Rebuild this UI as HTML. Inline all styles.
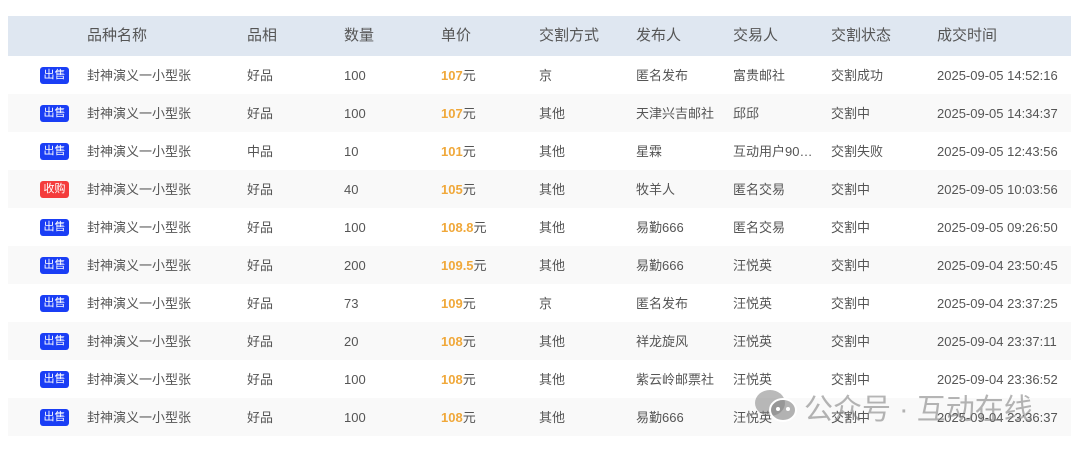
<!DOCTYPE html>
<html><head><meta charset="utf-8"><style>
body{margin:0;width:1080px;height:449px;background:#fff;font-family:"Liberation Sans","Noto Sans CJK SC",sans-serif;color:#555;position:relative;overflow:hidden}
.hd{position:absolute;left:8px;top:16px;width:1063px;height:40px;background:#dfe7f1}
.r{position:absolute;left:8px;width:1063px;height:38px}
.r.a{background:#f9f9f9}
.c{position:absolute;white-space:nowrap;font-size:13px;line-height:38px;top:1px}
.h{font-size:15px;line-height:40px;color:#555;top:0}
.b{position:absolute;left:32px;top:11px;width:29px;height:17px;border-radius:3px;background:#1a3ef5;color:#fff;font-size:11px;line-height:17px;text-align:center}
.b.red{background:#f43c3c}
.p{color:#f0a83a;font-weight:bold}
.wm{position:absolute;top:386px;font-size:29px;color:rgba(120,120,120,0.55);white-space:nowrap}
</style></head><body>
<div class="hd">
<span class="c h" style="left:79px">品种名称</span><span class="c h" style="left:239px">品相</span><span class="c h" style="left:336px">数量</span><span class="c h" style="left:433px">单价</span><span class="c h" style="left:531px">交割方式</span><span class="c h" style="left:628px">发布人</span><span class="c h" style="left:725px">交易人</span><span class="c h" style="left:823px">交割状态</span><span class="c h" style="left:929px">成交时间</span>
</div>
<div id="rows"></div>
<script>
var d=[["出售","好品","100","107","京","匿名发布","富贵邮社","交割成功","2025-09-05 14:52:16"],
["出售","好品","100","107","其他","天津兴吉邮社","邱邱","交割中","2025-09-05 14:34:37"],
["出售","中品","10","101","其他","星霖","互动用户90…","交割失败","2025-09-05 12:43:56"],
["收购","好品","40","105","其他","牧羊人","匿名交易","交割中","2025-09-05 10:03:56"],
["出售","好品","100","108.8","其他","易勤666","匿名交易","交割中","2025-09-05 09:26:50"],
["出售","好品","200","109.5","其他","易勤666","汪悦英","交割中","2025-09-04 23:50:45"],
["出售","好品","73","109","京","匿名发布","汪悦英","交割中","2025-09-04 23:37:25"],
["出售","好品","20","108","其他","祥龙旋风","汪悦英","交割中","2025-09-04 23:37:11"],
["出售","好品","100","108","其他","紫云岭邮票社","汪悦英","交割中","2025-09-04 23:36:52"],
["出售","好品","100","108","其他","易勤666","汪悦英","交割中","2025-09-04 23:36:37"]];
var h="";d.forEach(function(r,i){h+='<div class="r'+(i%2?' a':'')+'" style="top:'+(56+i*38)+'px"><span class="b'+(r[0]=="收购"?" red":"")+'">'+r[0]+'</span><span class="c" style="left:79px">封神演义一小型张</span><span class="c" style="left:239px">'+r[1]+'</span><span class="c" style="left:336px">'+r[2]+'</span><span class="c" style="left:433px"><span class="p">'+r[3]+'</span>元</span><span class="c" style="left:531px">'+r[4]+'</span><span class="c" style="left:628px">'+r[5]+'</span><span class="c" style="left:725px">'+r[6]+'</span><span class="c" style="left:823px">'+r[7]+'</span><span class="c" style="left:929px">'+r[8]+'</span></div>';});
document.getElementById("rows").innerHTML=h;
</script>
<svg style="position:absolute;left:753px;top:388px" width="46" height="36" viewBox="0 0 46 36"><ellipse cx="17" cy="15" rx="15" ry="13" fill="rgba(130,130,130,0.55)"/><ellipse cx="30" cy="22" rx="13" ry="11" fill="rgba(130,130,130,0.6)" stroke="#fff" stroke-width="2"/><circle cx="25" cy="21" r="2" fill="#fff"/><circle cx="35" cy="21" r="2" fill="#fff"/></svg>
<div class="wm" style="left:804px">公众号 · 互动在线</div>
</body></html>
